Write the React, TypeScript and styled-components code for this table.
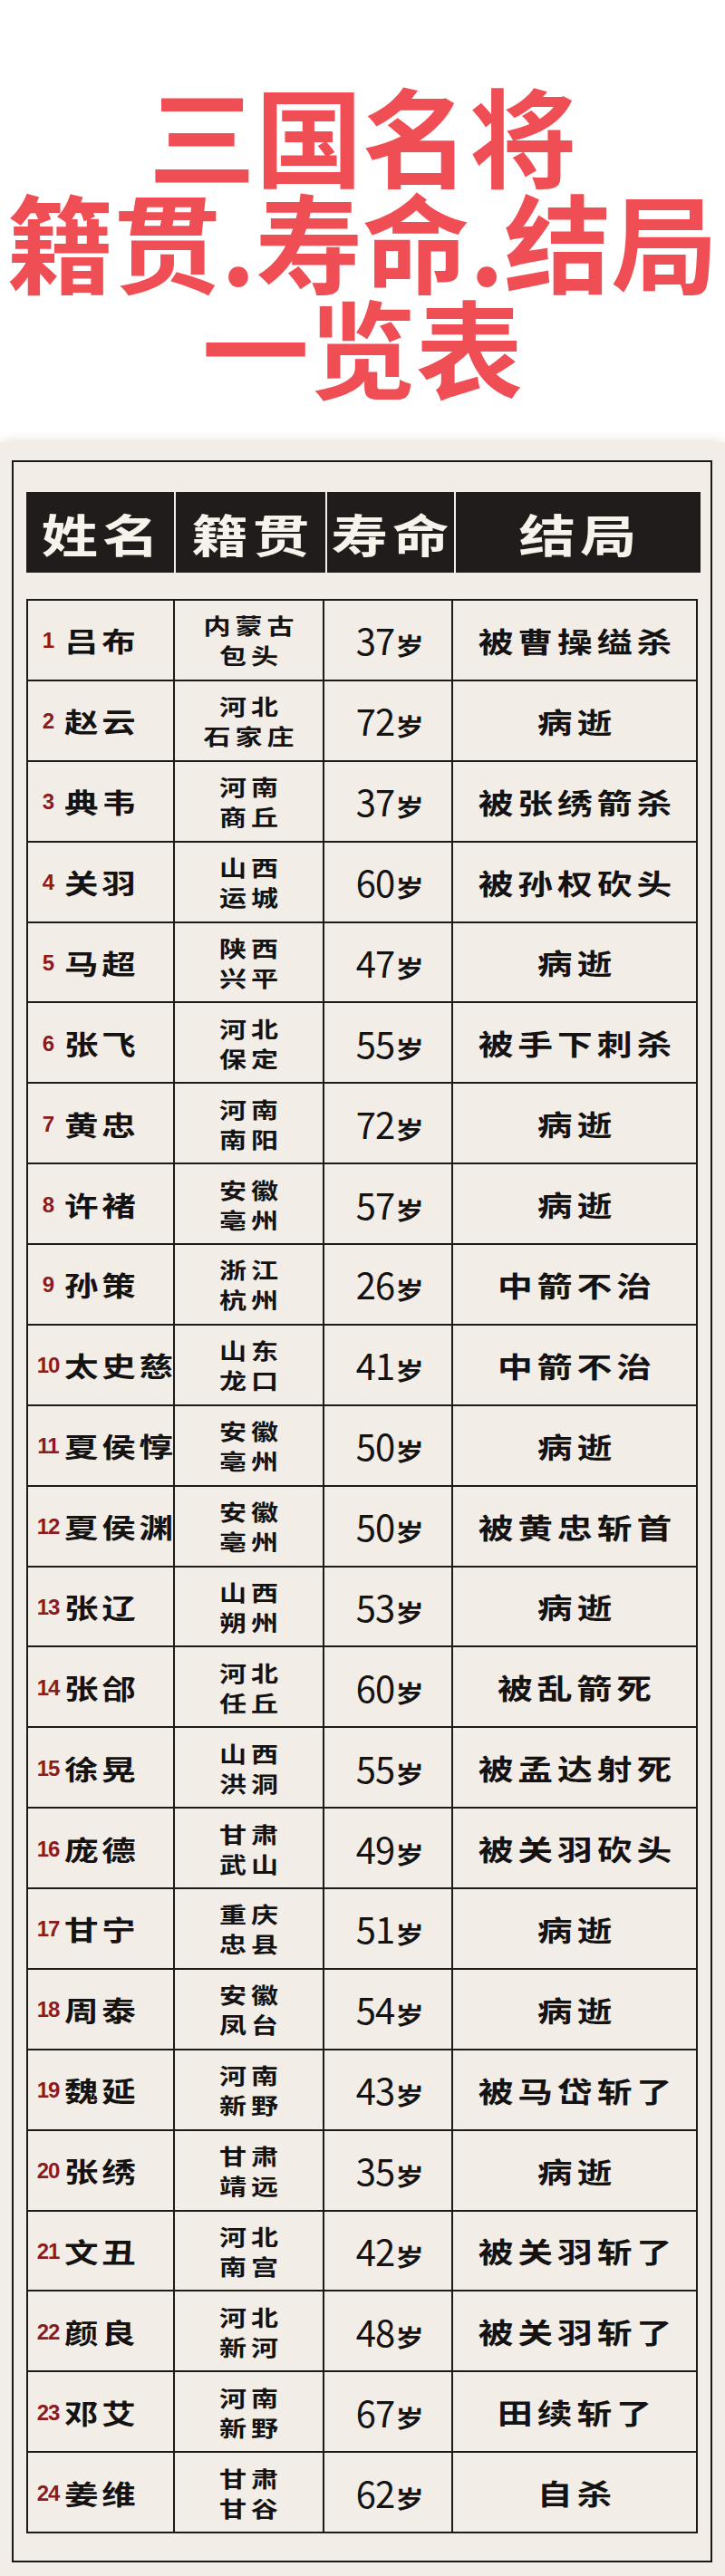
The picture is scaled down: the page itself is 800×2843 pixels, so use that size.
import React from "react";
import styled, {createGlobalStyle} from "styled-components";

const GlobalStyle = createGlobalStyle`
  html, body {
    margin: 0;
    padding: 0;
    background: #ffffff;
  }
  body {
    font-family: "Noto Sans CJK SC", "Noto Sans", sans-serif;
    color: #141212;
  }
  * {
    box-sizing: border-box;
  }
`

type General = {
	no: number
	name: string
	from: [string, string]
	age: number
	end: string
}

const generals: General[] = [
	{no: 1, name: '吕布', from: ['内蒙古', '包头'], age: 37, end: '被曹操缢杀'},
	{no: 2, name: '赵云', from: ['河北', '石家庄'], age: 72, end: '病逝'},
	{no: 3, name: '典韦', from: ['河南', '商丘'], age: 37, end: '被张绣箭杀'},
	{no: 4, name: '关羽', from: ['山西', '运城'], age: 60, end: '被孙权砍头'},
	{no: 5, name: '马超', from: ['陕西', '兴平'], age: 47, end: '病逝'},
	{no: 6, name: '张飞', from: ['河北', '保定'], age: 55, end: '被手下刺杀'},
	{no: 7, name: '黄忠', from: ['河南', '南阳'], age: 72, end: '病逝'},
	{no: 8, name: '许褚', from: ['安徽', '亳州'], age: 57, end: '病逝'},
	{no: 9, name: '孙策', from: ['浙江', '杭州'], age: 26, end: '中箭不治'},
	{no: 10, name: '太史慈', from: ['山东', '龙口'], age: 41, end: '中箭不治'},
	{no: 11, name: '夏侯惇', from: ['安徽', '亳州'], age: 50, end: '病逝'},
	{no: 12, name: '夏侯渊', from: ['安徽', '亳州'], age: 50, end: '被黄忠斩首'},
	{no: 13, name: '张辽', from: ['山西', '朔州'], age: 53, end: '病逝'},
	{no: 14, name: '张郃', from: ['河北', '任丘'], age: 60, end: '被乱箭死'},
	{no: 15, name: '徐晃', from: ['山西', '洪洞'], age: 55, end: '被孟达射死'},
	{no: 16, name: '庞德', from: ['甘肃', '武山'], age: 49, end: '被关羽砍头'},
	{no: 17, name: '甘宁', from: ['重庆', '忠县'], age: 51, end: '病逝'},
	{no: 18, name: '周泰', from: ['安徽', '凤台'], age: 54, end: '病逝'},
	{no: 19, name: '魏延', from: ['河南', '新野'], age: 43, end: '被马岱斩了'},
	{no: 20, name: '张绣', from: ['甘肃', '靖远'], age: 35, end: '病逝'},
	{no: 21, name: '文丑', from: ['河北', '南宫'], age: 42, end: '被关羽斩了'},
	{no: 22, name: '颜良', from: ['河北', '新河'], age: 48, end: '被关羽斩了'},
	{no: 23, name: '邓艾', from: ['河南', '新野'], age: 67, end: '田续斩了'},
	{no: 24, name: '姜维', from: ['甘肃', '甘谷'], age: 62, end: '自杀'},
]

const headers = ['姓名', '籍贯', '寿命', '结局']

const App = () => {
	return (
		<Page>
			<GlobalStyle/>
			<Title>
				<TitleLine>三国名将</TitleLine>
				<TitleLine>籍贯.寿命.结局</TitleLine>
				<TitleLine>一览表</TitleLine>
			</Title>
			<Paper>
				<Frame>
					<HeaderRow>
						{headers.map(h => (
							<HeaderCell key={h}>
								<Wide $sx={1.25}>{h}</Wide>
							</HeaderCell>
						))}
					</HeaderRow>
					<Table>
						{generals.map(g => (
							<React.Fragment key={g.no}>
								<NameCell>
									<No>{g.no}</No>
									<Name $sx={1.25} $origin="left center">{g.name}</Name>
								</NameCell>
								<Cell>
									<Origin>
										<Wide $sx={1.25}>{g.from[0]}</Wide>
										<Wide $sx={1.25}>{g.from[1]}</Wide>
									</Origin>
								</Cell>
								<Cell>
									<Age>
										<Digits>{g.age}</Digits>
										<Sui $sx={1.2}>岁</Sui>
									</Age>
								</Cell>
								<Cell>
									<Outcome $sx={1.25}>{g.end}</Outcome>
								</Cell>
							</React.Fragment>
						))}
					</Table>
				</Frame>
			</Paper>
		</Page>
	)
}

export default App


const Page = styled.div`
  width: 800px;
  min-height: 2843px;
  display: flex;
  flex-direction: column;
  background: #ffffff;
`

const Title = styled.h1`
  margin: 0;
  padding: 88px 0 49px;
  text-align: center;
  color: #f04e55;
  font-family: "Noto Sans CJK SC", "Noto Sans", sans-serif;
  font-weight: 700;
  font-size: 118px;
  line-height: 117px;
  white-space: nowrap;
`

const TitleLine = styled.span`
  display: block;
  height: 117px;
`

const Paper = styled.section`
  flex: 1;
  background: #f2eee7;
  padding: 20px 14px 15px 13px;
  box-shadow: 0 -6px 10px -4px rgba(230, 222, 210, 0.9);
`

const Frame = styled.div`
  border: 2px solid #1b1918;
  padding: 33px 14px 30px;
  display: flex;
  flex-direction: column;
  gap: 29px;
`

const Wide = styled.span<{ $sx: number; $origin?: string }>`
  display: inline-block;
  transform: scaleX(${p => p.$sx});
  transform-origin: ${p => p.$origin || 'center center'};
`

const HeaderRow = styled.div`
  display: grid;
  grid-template-columns: 163px 165px 140px 270px;
  column-gap: 2px;
  width: 741px;
  height: 89px;
`

const HeaderCell = styled.div`
  background: #1f1c1b;
  color: #f7f3ec;
  display: flex;
  align-items: center;
  justify-content: center;
  font-size: 50px;
  font-weight: 700;
  letter-spacing: 4px;
  line-height: 1;
  padding-left: 4px;
`

const Table = styled.div`
  display: grid;
  grid-template-columns: 162px 165px 142px 270px;
  grid-auto-rows: 88.875px;
  width: 741px;
  border-top: 2px solid #1d1b1a;
  border-left: 2px solid #1d1b1a;
`

const Cell = styled.div`
  border-right: 2px solid #1d1b1a;
  border-bottom: 2px solid #1d1b1a;
  display: flex;
  align-items: center;
  justify-content: center;
  color: #141212;
`

const NameCell = styled(Cell)`
  justify-content: flex-start;
  padding-left: 8px;
`

const No = styled.span`
  width: 28px;
  text-align: center;
  font-family: "Liberation Sans", "Noto Sans", sans-serif;
  font-weight: 700;
  font-size: 24px;
  letter-spacing: -1px;
  color: #8c1b20;
  margin-right: 4px;
  margin-top: 2px;
`

const Name = styled(Wide)`
  font-size: 30px;
  font-weight: 700;
  letter-spacing: 3px;
  line-height: 1;
  white-space: nowrap;
`

const Origin = styled.div`
  display: flex;
  flex-direction: column;
  align-items: center;
  font-size: 24px;
  font-weight: 700;
  letter-spacing: 4px;
  line-height: 33px;
  padding-left: 4px;
`

const Age = styled.div`
  display: flex;
  align-items: baseline;
  padding-left: 2px;
`

const Digits = styled.span`
  font-size: 40px;
  font-weight: 400;
  line-height: 1;
  letter-spacing: -1px;
`

const Sui = styled(Wide)`
  font-size: 26px;
  font-weight: 700;
  line-height: 1;
  margin-left: 4px;
`

const Outcome = styled(Wide)`
  font-size: 31px;
  font-weight: 700;
  letter-spacing: 4px;
  line-height: 1;
  white-space: nowrap;
  padding-left: 4px;
`
